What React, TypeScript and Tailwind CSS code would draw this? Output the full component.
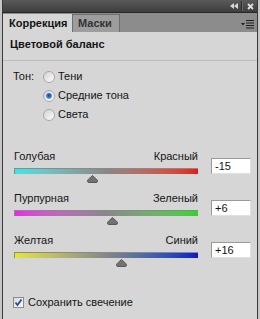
import React from "react";

const font = { fontFamily: '"Liberation Sans", Arial, sans-serif' };

function Thumb({ pct }: { pct: number }) {
  return (
    <div className="relative h-[8px]">
      <svg
        className="absolute top-0"
        style={{ left: `${pct * 184 - 5}px` }}
        width="11"
        height="8"
        viewBox="0 0 11 8"
      >
        <path d="M5.5 0.5 L9.5 4.2 Q10.5 5 10.5 6 Q10.5 7.5 9 7.5 L2 7.5 Q0.5 7.5 0.5 6 Q0.5 5 1.5 4.2 Z" fill="#727272" stroke="#5a5a5a" strokeWidth="1" />
      </svg>
    </div>
  );
}

function SliderRow({
  left,
  right,
  value,
  pct,
  gradient,
}: {
  left: string;
  right: string;
  value: string;
  pct: number;
  gradient: string;
}) {
  return (
    <div className="flex items-start pl-[11px]">
      <div className="flex w-[184px] flex-col">
        <div className="flex h-[14px] items-center justify-between leading-none">
          <span>{left}</span>
          <span>{right}</span>
        </div>
        <div className={`mt-[5px] h-[6px] border-t border-l border-[#8a8a8a] ${gradient}`} />
        <div className="mt-[1px]">
          <Thumb pct={pct} />
        </div>
      </div>
      <div className="ml-[13px] mt-[9px] flex h-[16px] w-[40px] items-center border border-t-[#9a9a9a] border-l-[#9a9a9a] border-r-[#e0e0e0] border-b-[#e0e0e0] bg-white pl-[3px] leading-none">
        {value}
      </div>
    </div>
  );
}

function Radio({ checked }: { checked?: boolean }) {
  return (
    <svg width="12" height="12" viewBox="0 0 12 12">
      <defs>
        <linearGradient id="rg" x1="0" y1="0" x2="1" y2="1">
          <stop offset="0" stopColor="#d0d0d0" />
          <stop offset="1" stopColor="#ffffff" />
        </linearGradient>
        <radialGradient id="rb" cx="0.5" cy="0.4" r="0.6">
          <stop offset="0" stopColor="#1c3f8c" />
          <stop offset="0.6" stopColor="#3a78d0" />
          <stop offset="1" stopColor="#8ab4e8" />
        </radialGradient>
      </defs>
      <circle cx="6" cy="6" r="5.5" fill="url(#rg)" stroke="#a8a8a8" />
      {checked && <circle cx="6" cy="6" r="3" fill="url(#rb)" />}
    </svg>
  );
}

export default function App() {
  return (
    <div
      className="flex h-[319px] w-[260px] bg-[#c6c6c6] px-[2px] text-[11px] text-[#141414]"
      style={font}
    >
      <div className="flex flex-1 flex-col border-x border-[#3a3a3a] bg-[#d6d6d6]">
        {/* title bar */}
        <div className="flex h-[12px] items-center justify-end bg-gradient-to-b from-[#5a5a5a] to-[#3e3e3e] pr-[3px]">
          <svg width="8" height="6" viewBox="0 0 8 6" className="mr-[3px]">
            <path d="M0 3 L4 0 L4 6 Z M4 3 L8 0 L8 6 Z" fill="#d8d8d8" />
          </svg>
          <div className="mr-[4px] h-[10px] w-[2px] border-l border-[#2a2a2a] bg-[#6a6a6a]" />
          <svg width="7" height="7" viewBox="0 0 7 7">
            <path d="M1 1 L6 6 M6 1 L1 6" stroke="#e0e0e0" strokeWidth="1.8" />
          </svg>
        </div>
        {/* tab strip */}
        <div className="flex h-[20px] items-end border-t border-[#262626] bg-[#8c8c8c]">
          <div className="flex h-[18px] w-[69px] items-center bg-[#d6d6d6] pl-[6px] font-bold leading-none">
            Коррекция
          </div>
          <div className="flex h-[18px] w-[48px] items-center border-x border-t border-[#6e6e6e] bg-[#9d9d9d] pl-[5px] font-bold leading-none text-[#333]">
            Маски
          </div>
          <div className="flex-1" />
          <div className="mb-[3px] mr-[3px] flex items-center self-end">
            <svg width="13" height="9" viewBox="0 0 13 9">
              <path d="M0 3 L4 3 L2 5.5 Z" fill="#1e1e1e" />
              <path d="M5 0.5 H13 M5 3 H13 M5 5.5 H13 M5 8 H13" stroke="#1e1e1e" strokeWidth="1" />
            </svg>
          </div>
        </div>
        {/* content */}
        <div className="flex h-[24px] items-center pl-[7px] font-bold leading-none">
          Цветовой баланс
        </div>
        <div className="mt-[4px] h-[1px] bg-[#bdbdbd]" />
        <div className="mt-[6px] flex pl-[10px]">
          <div className="flex h-[18px] w-[30px] items-center leading-none">Тон:</div>
          <div className="flex flex-col">
            <div className="flex h-[19px] items-center gap-[3px] leading-none">
              <Radio />
              <span>Тени</span>
            </div>
            <div className="flex h-[19px] items-center gap-[3px] leading-none">
              <Radio checked />
              <span>Средние тона</span>
            </div>
            <div className="flex h-[19px] items-center gap-[3px] leading-none">
              <Radio />
              <span>Света</span>
            </div>
          </div>
        </div>
        <div className="mt-[25px] flex flex-col gap-[8px]">
          <SliderRow
            left="Голубая"
            right="Красный"
            value="-15"
            pct={0.425}
            gradient="bg-gradient-to-r from-[#36e6e6] via-[#8a8686] to-[#e61414]"
          />
          <SliderRow
            left="Пурпурная"
            right="Зеленый"
            value="+6"
            pct={0.53}
            gradient="bg-gradient-to-r from-[#e628e6] via-[#8a868a] to-[#28d628]"
          />
          <SliderRow
            left="Желтая"
            right="Синий"
            value="+16"
            pct={0.58}
            gradient="bg-gradient-to-r from-[#e6e628] via-[#868686] to-[#1414c8]"
          />
        </div>
        <div className="mt-[30px] flex items-center gap-[4px] pl-[10px] leading-none">
          <svg width="11" height="11" viewBox="0 0 11 11">
            <defs>
              <linearGradient id="cb" x1="0" y1="0" x2="1" y2="1">
                <stop offset="0" stopColor="#d8d8d8" />
                <stop offset="1" stopColor="#ffffff" />
              </linearGradient>
            </defs>
            <rect x="0.5" y="0.5" width="10" height="10" fill="url(#cb)" stroke="#8c8c8c" />
            <path d="M2.5 5.5 L4.5 8 L8.5 2.5" fill="none" stroke="#2a4c96" strokeWidth="1.8" />
          </svg>
          <span>Сохранить свечение</span>
        </div>
      </div>
    </div>
  );
}
